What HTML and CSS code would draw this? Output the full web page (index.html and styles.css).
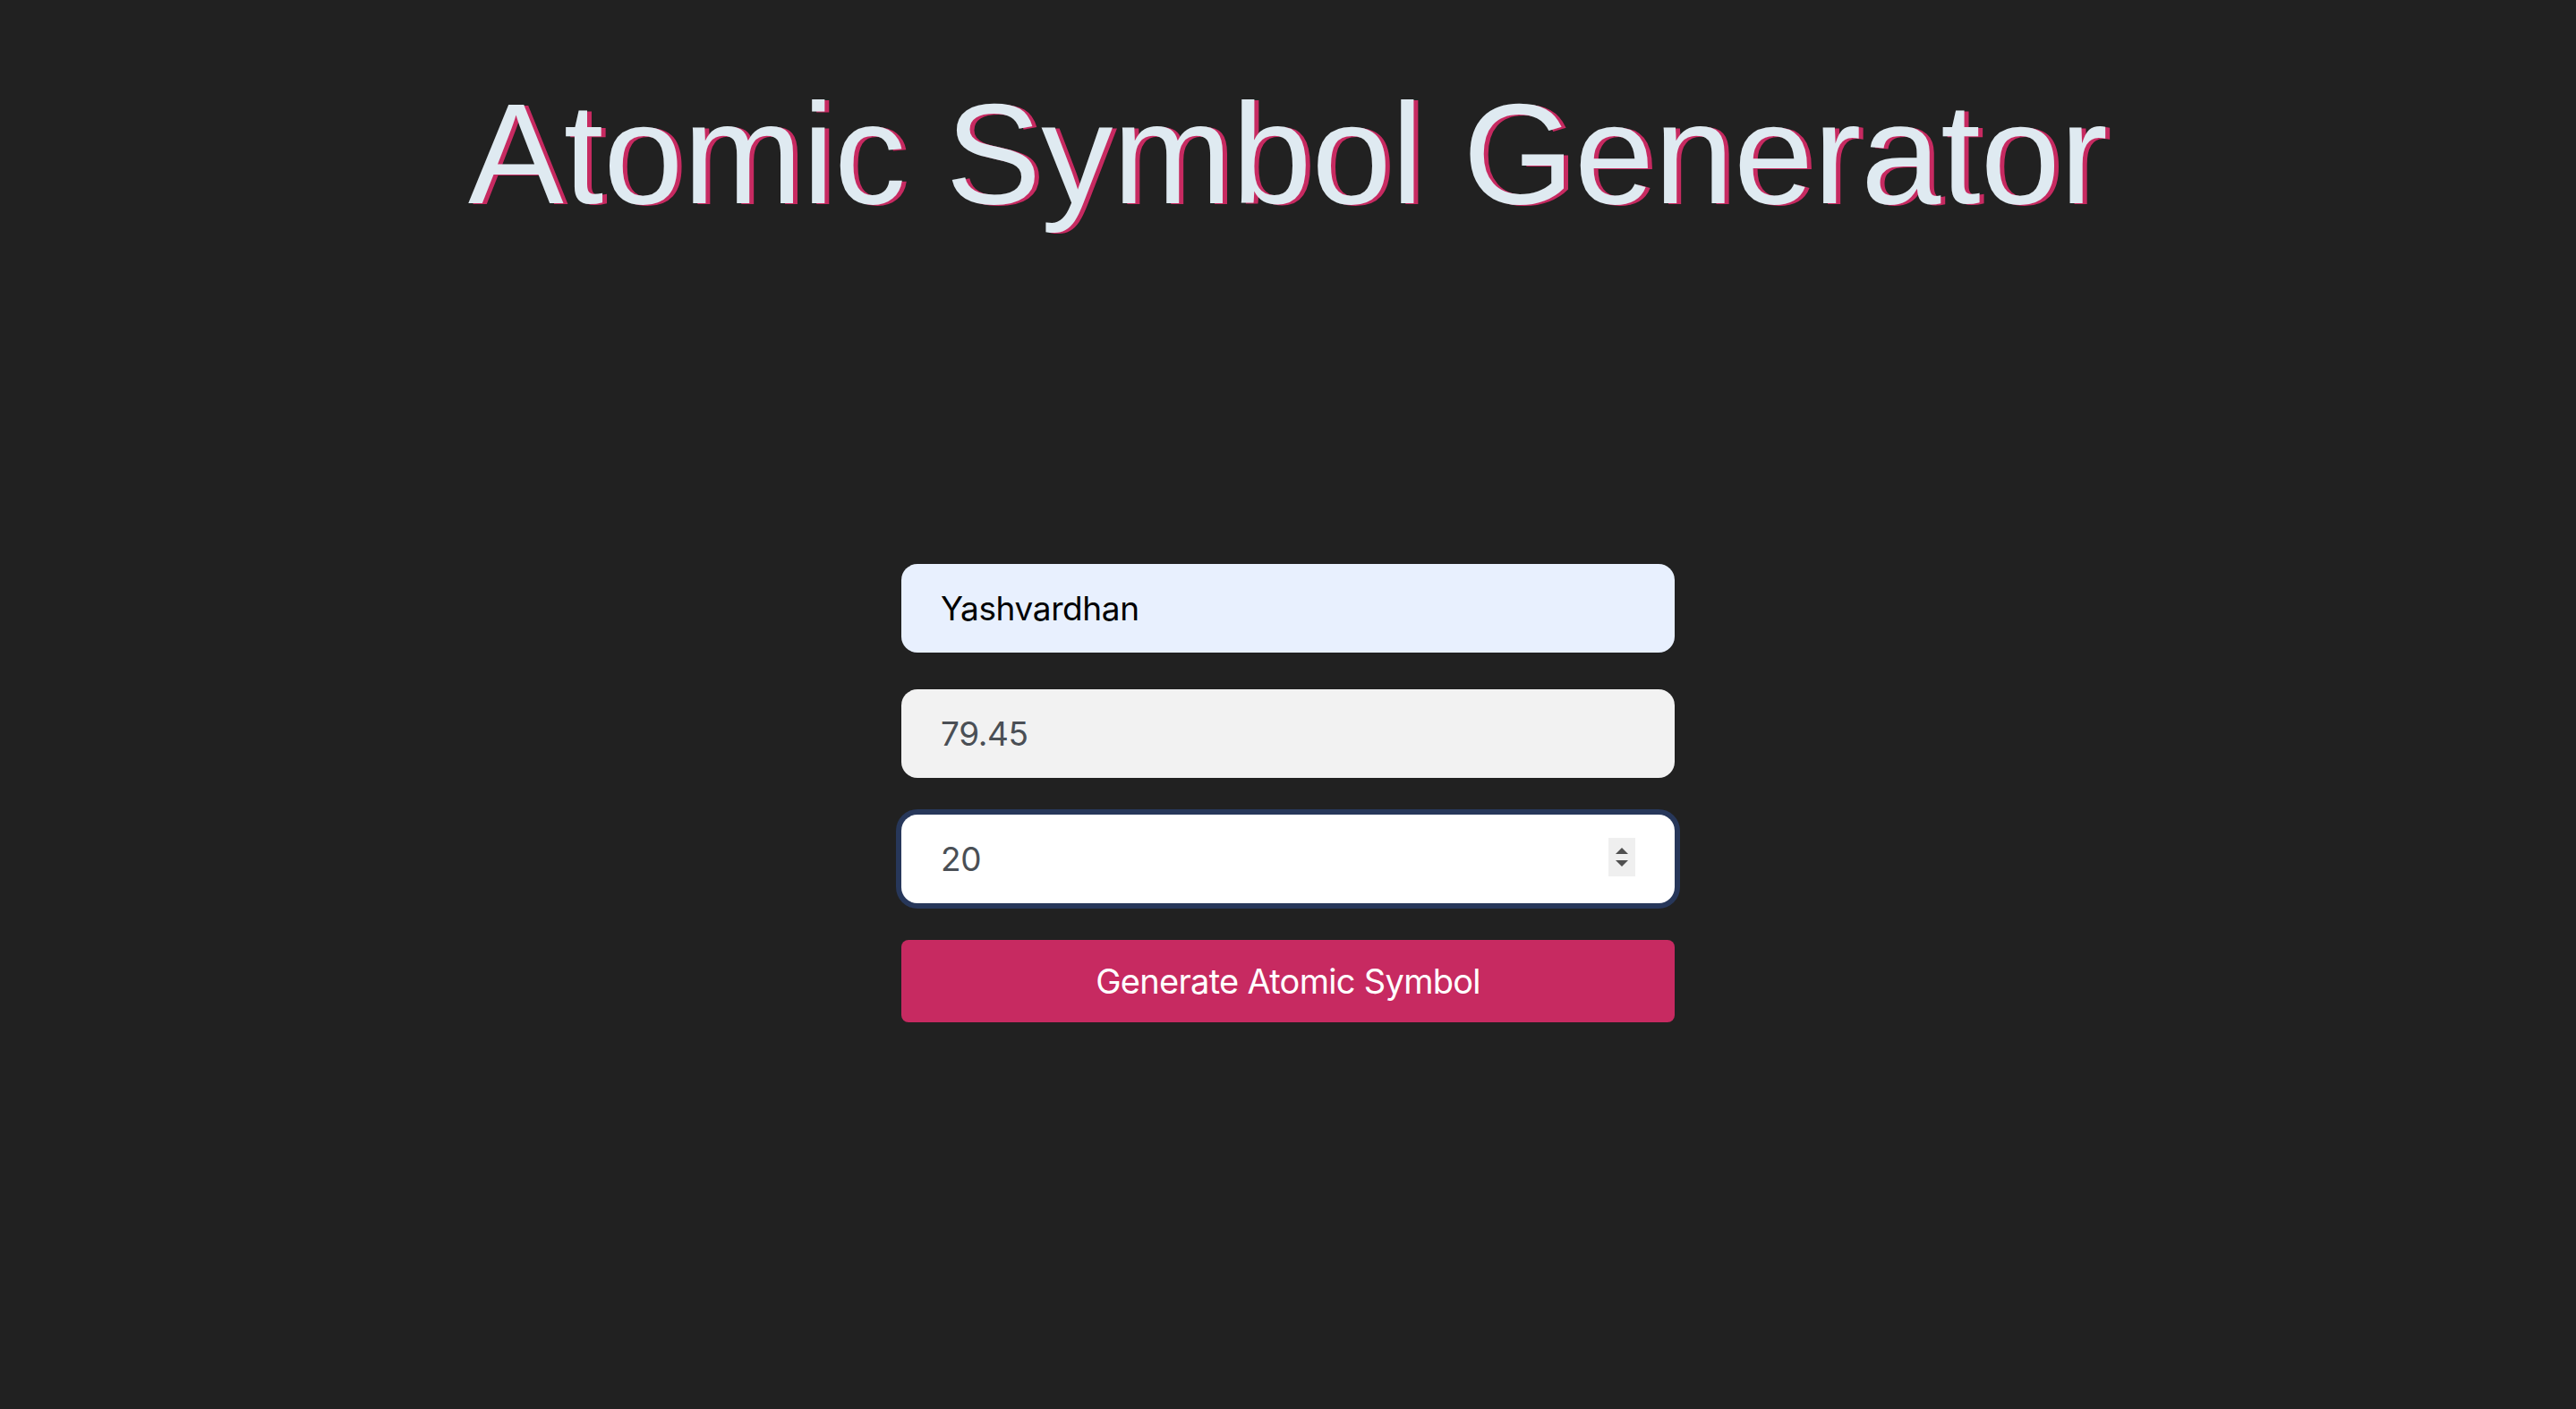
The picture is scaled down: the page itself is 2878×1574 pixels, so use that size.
FILE: index.html
```html
<!DOCTYPE html>
<html lang="en">
<head>
<meta charset="utf-8">
<title>Atomic Symbol Generator</title>
<link rel="stylesheet" href="styles.css">
</head>
<body>
<main class="page">
  <h1 class="title">Atomic Symbol Generator</h1>
  <form class="form">
    <input class="field field-autofill" type="text" value="Yashvardhan">
    <input class="field field-muted" type="text" value="79.45">
    <div class="field-wrap">
      <input class="field field-focus" type="number" value="20">
      <span class="spin" aria-hidden="true">
        <span class="spin-up"></span>
        <span class="spin-down"></span>
      </span>
    </div>
    <button class="btn" type="button">Generate Atomic Symbol</button>
  </form>
</main>
</body>
</html>
```
FILE: styles.css
```css
html, body {
  margin: 0;
  padding: 0;
  background: #212121;
}
body {
  min-height: 1574px;
  font-family: Inter, "Noto Sans", sans-serif;
}
.page {
  display: flex;
  flex-direction: column;
  align-items: center;
}
.title {
  margin: 80px 0 0 0;
  font-family: "Liberation Sans", Arial, sans-serif;
  font-weight: 400;
  font-size: 160px;
  line-height: 184px;
  color: #dfeaf1;
  text-shadow: 5px 1px 0 #c72a61;
  letter-spacing: 0;
}
.form {
  margin-top: 366px;
  width: 864px;
  display: flex;
  flex-direction: column;
  gap: 41px;
}
.field {
  box-sizing: border-box;
  width: 100%;
  height: 99px;
  border: none;
  border-radius: 18px;
  padding: 0 44px;
  font-family: Inter, "Noto Sans", sans-serif;
  font-size: 37px;
  letter-spacing: -0.4px;
  color: #4a4f55;
  background: #ffffff;
  outline: none;
  display: block;
}
.field-autofill {
  background: #e8f0fe;
  color: #000000;
}
.field-muted {
  background: #f2f2f2;
}
.field-wrap {
  position: relative;
}
.field-focus {
  box-shadow: 0 0 0 6px #27375a;
  -moz-appearance: textfield;
}
.field-focus::-webkit-inner-spin-button,
.field-focus::-webkit-outer-spin-button {
  -webkit-appearance: none;
  margin: 0;
}
.spin {
  position: absolute;
  left: 790px;
  top: 26px;
  width: 30px;
  height: 43px;
  background: #efefef;
  display: flex;
  flex-direction: column;
  align-items: center;
  justify-content: center;
  gap: 7px;
}
.spin-up {
  width: 0;
  height: 0;
  border-left: 7px solid transparent;
  border-right: 7px solid transparent;
  border-bottom: 7px solid #505050;
}
.spin-down {
  width: 0;
  height: 0;
  border-left: 7px solid transparent;
  border-right: 7px solid transparent;
  border-top: 7px solid #505050;
}
.btn {
  height: 92px;
  margin-top: 0;
  border: none;
  border-radius: 8px;
  background: #c72a61;
  color: #ffffff;
  font-family: Inter, "Noto Sans", sans-serif;
  font-size: 38px;
  letter-spacing: -0.7px;
  font-weight: 400;
  cursor: pointer;
}
```
